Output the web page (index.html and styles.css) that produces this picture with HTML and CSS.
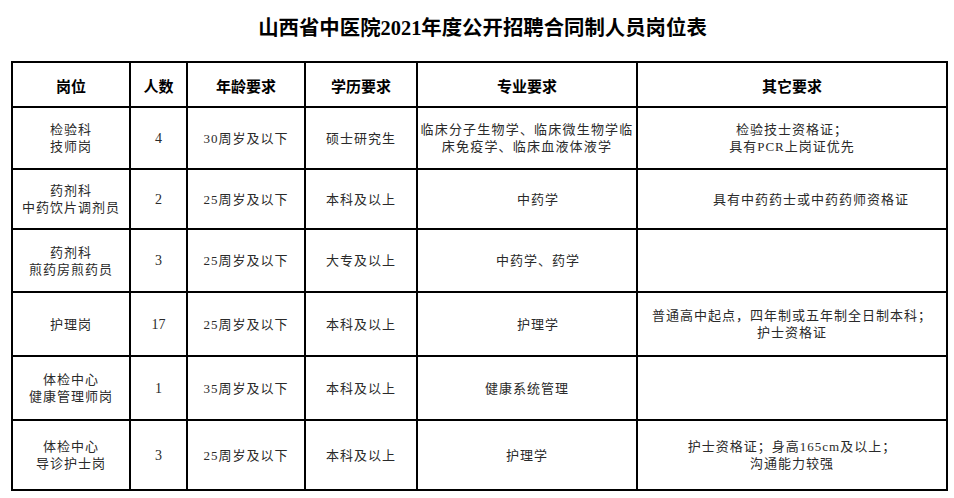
FILE: index.html
```html
<!DOCTYPE html>
<html lang="zh-CN">
<head>
<meta charset="utf-8">
<title>山西省中医院2021年度公开招聘合同制人员岗位表</title>
<link rel="stylesheet" href="styles.css">
</head>
<body>
<div class="page">
  <h1 class="title">山西省中医院2021年度公开招聘合同制人员岗位表</h1>
  <table class="jobs">
    <colgroup>
      <col class="c1"><col class="c2"><col class="c3"><col class="c4"><col class="c5"><col class="c6">
    </colgroup>
    <thead>
      <tr class="head">
        <th>岗位</th><th>人数</th><th>年龄要求</th><th>学历要求</th><th>专业要求</th><th>其它要求</th>
      </tr>
    </thead>
    <tbody>
      <tr class="r1">
        <td>检验科<br>技师岗</td>
        <td class="num">4</td>
        <td>30周岁及以下</td>
        <td>硕士研究生</td>
        <td class="major">临床分子生物学、临床微生物学临<br>床免疫学、临床血液体液学</td>
        <td>检验技士资格证；<br>具有PCR上岗证优先</td>
      </tr>
      <tr class="r2">
        <td>药剂科<br>中药饮片调剂员</td>
        <td class="num">2</td>
        <td>25周岁及以下</td>
        <td>本科及以上</td>
        <td class="shift">中药学</td>
        <td class="indent">具有中药药士或中药药师资格证</td>
      </tr>
      <tr class="r3">
        <td>药剂科<br>煎药房煎药员</td>
        <td class="num">3</td>
        <td>25周岁及以下</td>
        <td>大专及以上</td>
        <td class="shift">中药学、药学</td>
        <td></td>
      </tr>
      <tr class="r4">
        <td>护理岗</td>
        <td class="num">17</td>
        <td>25周岁及以下</td>
        <td>本科及以上</td>
        <td class="shift">护理学</td>
        <td>普通高中起点，四年制或五年制全日制本科；<br>护士资格证</td>
      </tr>
      <tr class="r5">
        <td>体检中心<br>健康管理师岗</td>
        <td class="num">1</td>
        <td>35周岁及以下</td>
        <td>本科及以上</td>
        <td>健康系统管理</td>
        <td></td>
      </tr>
      <tr class="r6">
        <td>体检中心<br>导诊护士岗</td>
        <td class="num">3</td>
        <td>25周岁及以下</td>
        <td>本科及以上</td>
        <td>护理学</td>
        <td>护士资格证；身高165cm及以上；<br>沟通能力较强</td>
      </tr>
    </tbody>
  </table>
</div>
</body>
</html>
```

FILE: styles.css
```css
html, body {
  margin: 0;
  padding: 0;
  background: #ffffff;
}

.page {
  width: 954px;
  height: 498px;
  padding-left: 11px;
  box-sizing: border-box;
}

.title {
  margin: 0;
  height: 61px;
  padding-top: 14px;
  box-sizing: border-box;
  width: 943px;
  text-align: center;
  font-family: "Liberation Serif", "Noto Sans CJK SC", serif;
  font-size: 20.4px;
  font-weight: bold;
  line-height: 28px;
  color: #000;
}

.jobs {
  border-collapse: collapse;
  table-layout: fixed;
  width: 935px;
  font-family: "Liberation Serif", "Noto Sans CJK SC", serif;
  color: #2a2a2a;
}

.c1 { width: 118px; }
.c2 { width: 57px; }
.c3 { width: 118px; }
.c4 { width: 112px; }
.c5 { width: 220px; }
.c6 { width: 310px; }

.jobs th,
.jobs td {
  border: 2px solid #000;
  text-align: center;
  vertical-align: middle;
  padding: 0;
}

.jobs th {
  font-family: "Noto Sans CJK SC", sans-serif;
  font-size: 15px;
  font-weight: bold;
  color: #000;
  height: 41px;
  padding-top: 2px;
}

.jobs td {
  font-size: 13px;
  line-height: 17px;
  letter-spacing: 1px;
}

.jobs td.num {
  letter-spacing: 0;
  font-size: 14px;
}

.jobs td.major {
  letter-spacing: 1.2px;
}

.jobs td.shift {
  padding-left: 22px;
}

.jobs td.indent {
  padding-left: 38px;
}

.r1 td { height: 60px; }
.r2 td { height: 58px; }
.r3 td { height: 61px; }
.r4 td { height: 62px; }
.r5 td { height: 62px; }
.r6 td { height: 68px; }
```
